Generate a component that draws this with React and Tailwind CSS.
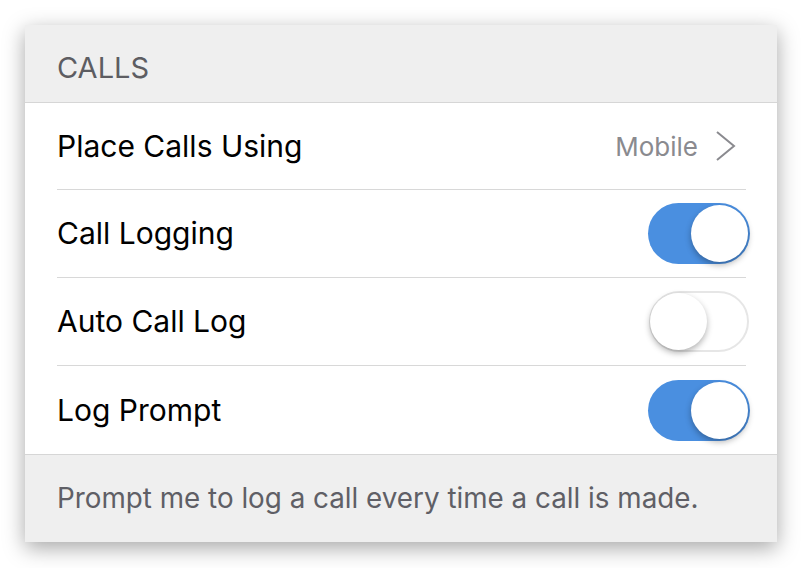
import { useState } from "react";

function Toggle({ on, onClick }) {
  return (
    <button
      onClick={onClick}
      className={
        on
          ? "relative w-[102px] h-[61px] rounded-full bg-[#4a8fe0] shrink-0 -mr-[4px]"
          : "relative w-[100px] h-[61px] rounded-full bg-white border-2 border-[#e6e6e6] shrink-0 -mr-[3px]"
      }
    >
      <span
        className={
          on
            ? "absolute top-[2px] right-[2px] w-[57px] h-[57px] rounded-full bg-white shadow-[0_3px_6px_rgba(0,0,0,0.3)]"
            : "absolute top-[0px] left-[-1px] w-[57px] h-[57px] rounded-full bg-white shadow-[0_3px_6px_rgba(0,0,0,0.3)]"
        }
      />
    </button>
  );
}

export default function App() {
  const [logging, setLogging] = useState(true);
  const [autoLog, setAutoLog] = useState(false);
  const [prompt, setPrompt] = useState(true);

  return (
    <div className="w-[802px] h-[568px] bg-white pt-[25px] pl-[25px] font-['Inter',sans-serif]">
      <div className="w-[752px] bg-white shadow-[0_6px_20px_rgba(0,0,0,0.35)]">
        {/* header */}
        <div className="h-[78px] bg-[#efefef] border-b border-[#d6d6d6] flex items-center px-[32px]">
          <span className="text-[29px] text-[#5d5d62] pt-[8px]">CALLS</span>
        </div>

        <div className="pl-[32px] pr-[31px]">
          <div className="h-[87px] flex items-center justify-between border-b border-[#d8d8d8]">
            <span className="text-[30px] text-black">Place Calls Using</span>
            <div className="flex items-center gap-[17px] pr-[10px]">
              <span className="text-[26px] text-[#8a8a8f]">Mobile</span>
              <svg width="21" height="30" viewBox="0 0 21 30" fill="none">
                <path d="M2 1 L19 15 L2 29" stroke="#8a8a8f" strokeWidth="2" />
              </svg>
            </div>
          </div>
          <div className="h-[88px] flex items-center justify-between border-b border-[#d8d8d8]">
            <span className="text-[30px] text-black">Call Logging</span>
            <Toggle on={logging} onClick={() => setLogging(!logging)} />
          </div>
          <div className="h-[88px] flex items-center justify-between border-b border-[#d8d8d8]">
            <span className="text-[30px] text-black">Auto Call Log</span>
            <Toggle on={autoLog} onClick={() => setAutoLog(!autoLog)} />
          </div>
          <div className="h-[88px] flex items-center justify-between">
            <span className="text-[30px] text-black">Log Prompt</span>
            <Toggle on={prompt} onClick={() => setPrompt(!prompt)} />
          </div>
        </div>

        {/* footer */}
        <div className="h-[88px] bg-[#efefef] border-t border-[#d6d6d6] flex items-center px-[32px]">
          <span className="text-[27.8px] text-[#5f5f66]">Prompt me to log a call every time a call is made.</span>
        </div>
      </div>
    </div>
  );
}
